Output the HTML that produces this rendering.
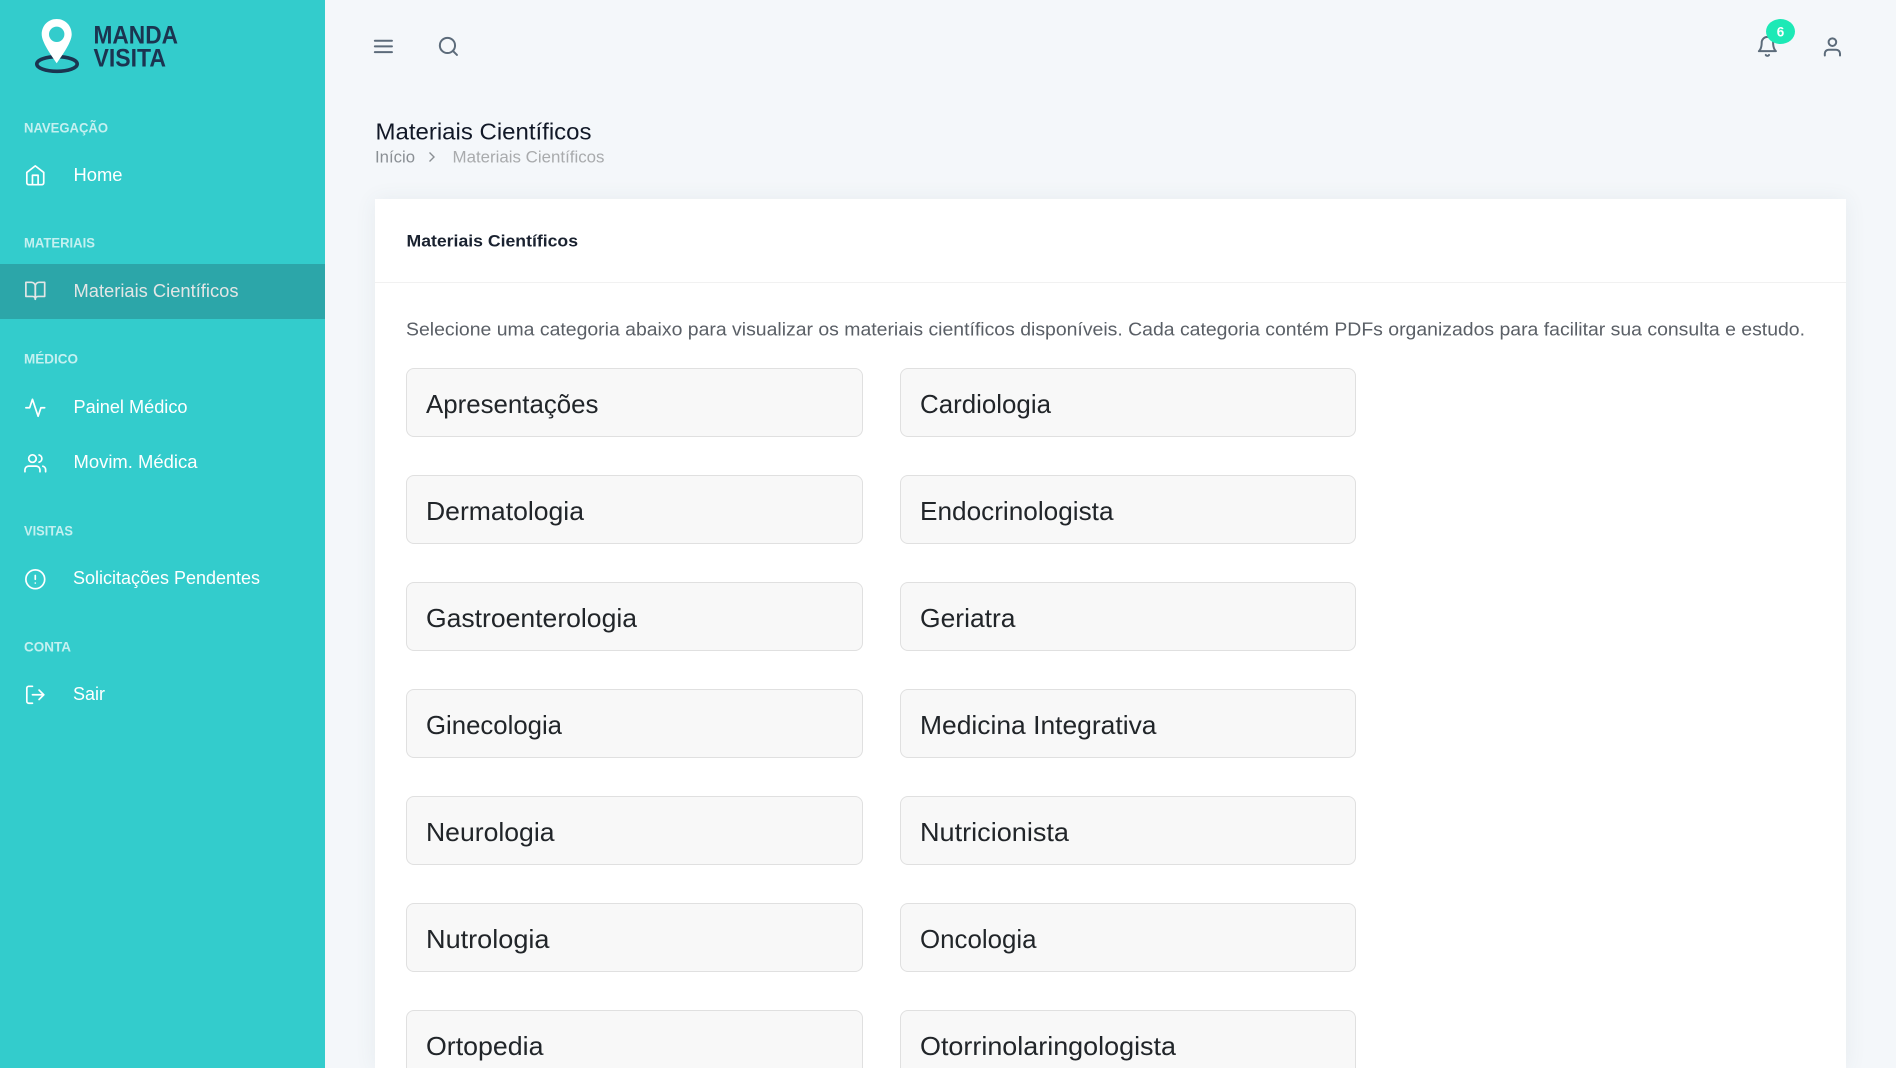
<!DOCTYPE html>
<html lang="pt-BR">
<head>
<meta charset="utf-8">
<title>Materiais Científicos</title>
<style>
html,body{margin:0;padding:0;width:1897px;height:1068px;overflow:hidden;background:#f4f7fa;font-family:"Liberation Sans",sans-serif}
.page{position:relative;width:1897px;height:1068px;overflow:hidden;background:#f4f7fa}
.side{position:absolute;left:0;top:0;width:325px;height:1068px;background:#33cccc}
.active{position:absolute;left:0;top:264px;width:325px;height:55px;background:#2ca6a9}
.main{position:absolute;left:375px;top:199px;width:1471px;height:869px;background:#fff;box-shadow:0 1px 20px 0 rgba(69,90,100,.08)}
.line{position:absolute;left:375px;top:282px;width:1471px;height:1px;background:#f1f1f1}
.c{position:absolute;box-sizing:border-box;width:457px;height:69px;background:#f8f8f8;border:1px solid #e0e0e0;border-radius:8px}
.r{left:900px;width:456px}
.edge{position:absolute;left:1896px;top:0;width:1px;height:1068px;background:#fff}
svg{position:absolute;left:0;top:0}
.s{fill:none;stroke-linecap:round;stroke-linejoin:round}
</style>
</head>
<body>
<div class="page">
<div class="side"></div>
<div class="active"></div>
<div class="main"></div>
<div class="line"></div>

<div class="c" style="left:406px;top:368px"></div><div class="c r" style="top:368px"></div>
<div class="c" style="left:406px;top:475px"></div><div class="c r" style="top:475px"></div>
<div class="c" style="left:406px;top:582px"></div><div class="c r" style="top:582px"></div>
<div class="c" style="left:406px;top:689px"></div><div class="c r" style="top:689px"></div>
<div class="c" style="left:406px;top:796px"></div><div class="c r" style="top:796px"></div>
<div class="c" style="left:406px;top:903px"></div><div class="c r" style="top:903px"></div>
<div class="c" style="left:406px;top:1010px"></div><div class="c r" style="top:1010px"></div>
<div class="edge"></div>

<svg width="1897" height="1068" viewBox="0 0 1897 1068" xmlns="http://www.w3.org/2000/svg" font-family="'Liberation Sans',sans-serif">
  <!-- logo -->
  <ellipse cx="57" cy="64" rx="20.2" ry="7.3" fill="none" stroke="#1b3450" stroke-width="3.6"/>
  <path d="M56.7 19C48 19 41.7 25.8 41.7 34.3c0 8 9.5 21 15 29 5.5-8 15-21 15-29C71.7 25.8 65.4 19 56.7 19z" fill="#fff"/>
  <circle cx="56.7" cy="34.3" r="7.7" fill="#33cccc"/>
  <g font-weight="700" fill="#1b3450" font-size="25">
    <text x="93.5" y="43.5" textLength="84.5" lengthAdjust="spacingAndGlyphs">MANDA</text>
    <text x="93.5" y="66.3" textLength="72.5" lengthAdjust="spacingAndGlyphs">VISITA</text>
  </g>

  <!-- sidebar labels -->
  <g font-size="14" font-weight="700" fill="#c4f0f0">
    <text x="24" y="132.3" textLength="84" lengthAdjust="spacingAndGlyphs">NAVEGAÇÃO</text>
    <text x="24" y="247.5" textLength="71" lengthAdjust="spacingAndGlyphs">MATERIAIS</text>
    <text x="24" y="363.3" textLength="54" lengthAdjust="spacingAndGlyphs">MÉDICO</text>
    <text x="24" y="535.3" textLength="49" lengthAdjust="spacingAndGlyphs">VISITAS</text>
    <text x="24" y="651.3" textLength="47" lengthAdjust="spacingAndGlyphs">CONTA</text>
  </g>

  <!-- sidebar items -->
  <g font-size="18" fill="#fff">
    <text x="73.5" y="181" textLength="49" lengthAdjust="spacingAndGlyphs">Home</text>
    <text x="73.5" y="297" textLength="165" lengthAdjust="spacingAndGlyphs" fill="#e3e6e6">Materiais Científicos</text>
    <text x="73.5" y="413" textLength="114" lengthAdjust="spacingAndGlyphs">Painel Médico</text>
    <text x="73.5" y="468" textLength="124" lengthAdjust="spacingAndGlyphs">Movim. Médica</text>
    <text x="73" y="584" textLength="187" lengthAdjust="spacingAndGlyphs">Solicitações Pendentes</text>
    <text x="73" y="700" textLength="32" lengthAdjust="spacingAndGlyphs">Sair</text>
  </g>

  <!-- sidebar icons -->
  <g class="s" stroke="#fff" stroke-width="1.8">
    <g transform="translate(24,164) scale(.94)">
      <path d="M3 9l9-7 9 7v11a2 2 0 0 1-2 2H5a2 2 0 0 1-2-2z"/><path d="M9 22V12h6v10"/>
    </g>
    <g transform="translate(24,279.5) scale(.94)" stroke="#e3e6e6">
      <path d="M2 3h6a4 4 0 0 1 4 4v14a3 3 0 0 0-3-3H2z"/><path d="M22 3h-6a4 4 0 0 0-4 4v14a3 3 0 0 1 3-3h7z"/>
    </g>
    <g transform="translate(24,396.500) scale(.94)">
      <path d="M22 12h-4l-3 9L9 3l-3 9H2"/>
    </g>
    <g transform="translate(24,452) scale(.94)">
      <path d="M17 21v-2a4 4 0 0 0-4-4H5a4 4 0 0 0-4 4v2"/><circle cx="9" cy="7" r="4"/><path d="M23 21v-2a4 4 0 0 0-3-3.87"/><path d="M16 3.13a4 4 0 0 1 0 7.75"/>
    </g>
    <g transform="translate(24,568) scale(.94)">
      <circle cx="12" cy="12" r="10"/><path d="M12 8v4"/><path d="M12 16h.01"/>
    </g>
    <g transform="translate(24,683.5) scale(.94)">
      <path d="M9 21H5a2 2 0 0 1-2-2V5a2 2 0 0 1 2-2h4"/><path d="M16 17l5-5-5-5"/><path d="M21 12H9"/>
    </g>
  </g>

  <!-- top bar icons -->
  <g class="s" stroke="#5c6b7a" stroke-width="2.1">
    <g transform="translate(372,35) scale(.95)">
      <path d="M3 12h18"/><path d="M3 6h18"/><path d="M3 18h18"/>
    </g>
    <g transform="translate(437,35) scale(.95)">
      <circle cx="11" cy="11" r="8"/><path d="M21 21l-4.35-4.35"/>
    </g>
    <g transform="translate(1756,35) scale(.95)">
      <path d="M18 8A6 6 0 0 0 6 8c0 7-3 9-3 9h18s-3-2-3-9"/><path d="M13.73 21a2 2 0 0 1-3.46 0"/>
    </g>
    <g transform="translate(1821,35.5) scale(.95)">
      <path d="M20 21v-2a4 4 0 0 0-4-4H8a4 4 0 0 0-4 4v2"/><circle cx="12" cy="7" r="4"/>
    </g>
  </g>
  <ellipse cx="1780.500" cy="31.500" rx="14.500" ry="12.500" fill="#1de9b6"/>
  <text x="1780.500" y="36.300" font-size="13.500" font-weight="700" fill="#fff" text-anchor="middle">6</text>

  <!-- page header -->
  <text x="375.500" y="139.700" font-size="23" fill="#111827" textLength="216" lengthAdjust="spacingAndGlyphs">Materiais Científicos</text>
  <text x="375" y="162.500" font-size="16.500" fill="#8a8f94" textLength="40" lengthAdjust="spacingAndGlyphs">Início</text>
  <path d="M429.500 152.500l4.500 4.500-4.500 4.500" fill="none" stroke="#8a8f94" stroke-width="1.400"/>
  <text x="452.500" y="162.500" font-size="16.500" fill="#a9abad" textLength="152" lengthAdjust="spacingAndGlyphs">Materiais Científicos</text>

  <!-- card -->
  <text x="406.500" y="246.500" font-size="17" font-weight="700" fill="#1a2230" textLength="171.500" lengthAdjust="spacingAndGlyphs">Materiais Científicos</text>
  <text x="406" y="335.500" font-size="18" fill="#5a5f66" textLength="1399" lengthAdjust="spacingAndGlyphs">Selecione uma categoria abaixo para visualizar os materiais científicos disponíveis. Cada categoria contém PDFs organizados para facilitar sua consulta e estudo.</text>

  <g font-size="26" fill="#212529">
    <text x="426" y="413" textLength="172.500" lengthAdjust="spacingAndGlyphs">Apresentações</text>
    <text x="920" y="413" textLength="131" lengthAdjust="spacingAndGlyphs">Cardiologia</text>
    <text x="426" y="520" textLength="158" lengthAdjust="spacingAndGlyphs">Dermatologia</text>
    <text x="920" y="520" textLength="193.500" lengthAdjust="spacingAndGlyphs">Endocrinologista</text>
    <text x="426" y="627" textLength="211" lengthAdjust="spacingAndGlyphs">Gastroenterologia</text>
    <text x="920" y="627" textLength="95.500" lengthAdjust="spacingAndGlyphs">Geriatra</text>
    <text x="426" y="734" textLength="136" lengthAdjust="spacingAndGlyphs">Ginecologia</text>
    <text x="920" y="734" textLength="236.500" lengthAdjust="spacingAndGlyphs">Medicina Integrativa</text>
    <text x="426" y="841" textLength="128.500" lengthAdjust="spacingAndGlyphs">Neurologia</text>
    <text x="920" y="841" textLength="149" lengthAdjust="spacingAndGlyphs">Nutricionista</text>
    <text x="426" y="948" textLength="123.500" lengthAdjust="spacingAndGlyphs">Nutrologia</text>
    <text x="920" y="948" textLength="116.500" lengthAdjust="spacingAndGlyphs">Oncologia</text>
    <text x="426" y="1055" textLength="117.500" lengthAdjust="spacingAndGlyphs">Ortopedia</text>
    <text x="920" y="1055" textLength="256" lengthAdjust="spacingAndGlyphs">Otorrinolaringologista</text>
  </g>
</svg>
</div>
</body>
</html>
